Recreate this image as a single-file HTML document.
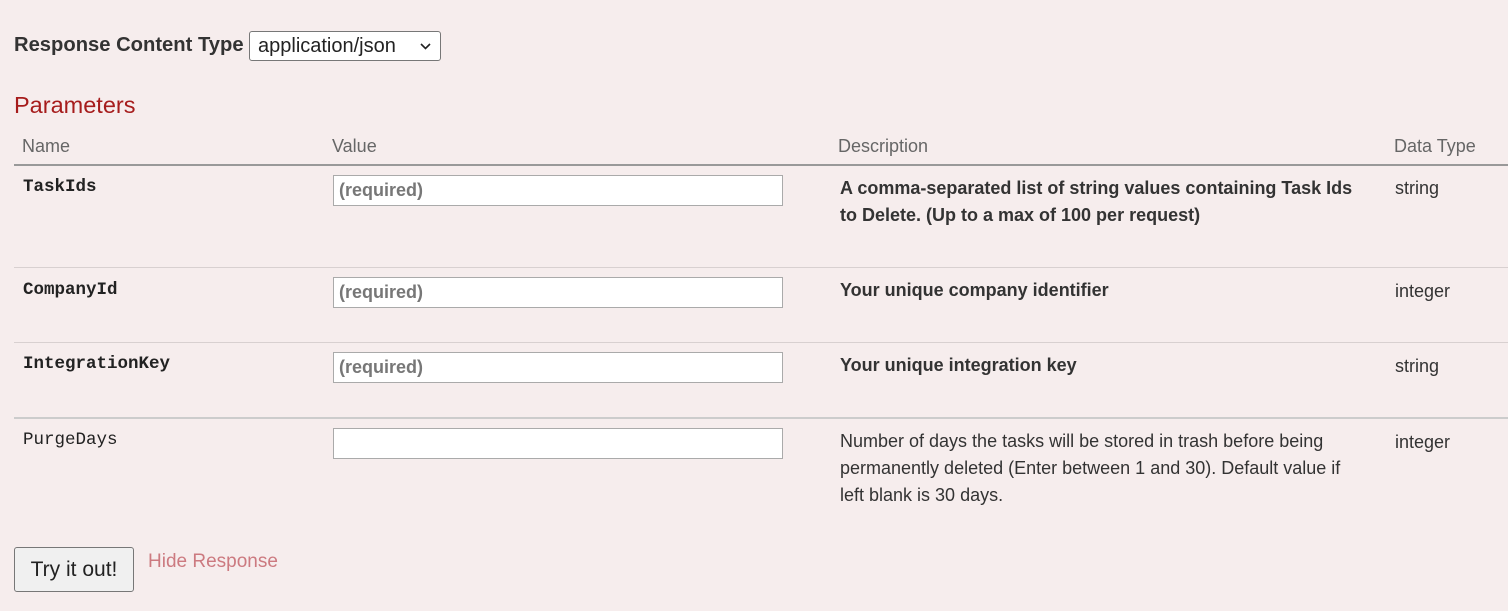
<!DOCTYPE html>
<html><head><style>
body{margin:0;width:1508px;height:611px;background:#f6eded;font-family:"Liberation Sans",sans-serif;color:#333;position:relative;overflow:hidden}
.a{position:absolute;white-space:nowrap}
.h{font-size:18px;color:#666}
.n{font-family:"Liberation Mono",monospace;font-size:17.5px;color:#222}
.in{position:absolute;left:333px;background:#fff;border:1px solid #aaa;font-size:18px;font-weight:bold;color:#777;line-height:29px;padding-left:5px;box-sizing:border-box;width:450px;height:31px}
.d{font-size:18px;line-height:27px;color:#333}
.line{position:absolute;left:14px;right:0;height:1px;background:#d8d0d0}
</style></head><body>
<div class="a" style="left:14px;top:34px;font-size:20.2px;font-weight:bold;color:#333">Response Content Type</div>
<div class="a" style="left:249px;top:31px;width:182px;height:28px;border:1px solid #777;border-radius:3px;background:#fff;font-size:20px;line-height:28px;padding-left:8px;color:#222">application/json
<svg style="position:absolute;left:170px;top:11px" width="11" height="7" viewBox="0 0 11 7"><path d="M1 1 L5.5 5.5 L10 1" fill="none" stroke="#222" stroke-width="1.6"/></svg></div>
<div class="a" style="left:14px;top:92px;font-size:23.5px;color:#a61c1c">Parameters</div>
<div class="a h" style="left:22px;top:136px">Name</div>
<div class="a h" style="left:332px;top:136px">Value</div>
<div class="a h" style="left:838px;top:136px">Description</div>
<div class="a h" style="left:1394px;top:136px">Data Type</div>
<div class="line" style="top:164px;height:2px;background:#999"></div>

<div class="a n" style="left:23px;top:177px;font-weight:bold">TaskIds</div>
<div class="in" style="top:175px">(required)</div>
<div class="a d" style="left:840px;top:175px;font-weight:bold">A comma-separated list of string values containing Task Ids<br>to Delete. (Up to a max of 100 per request)</div>
<div class="a d" style="left:1395px;top:175px">string</div>
<div class="line" style="top:267px"></div>

<div class="a n" style="left:23px;top:280px;font-weight:bold">CompanyId</div>
<div class="in" style="top:277px">(required)</div>
<div class="a d" style="left:840px;top:277px;font-weight:bold">Your unique company identifier</div>
<div class="a d" style="left:1395px;top:278px">integer</div>
<div class="line" style="top:342px"></div>

<div class="a n" style="left:23px;top:354px;font-weight:bold">IntegrationKey</div>
<div class="in" style="top:352px">(required)</div>
<div class="a d" style="left:840px;top:352px;font-weight:bold">Your unique integration key</div>
<div class="a d" style="left:1395px;top:353px">string</div>
<div class="line" style="top:417px;height:2px;background:#ccc"></div>

<div class="a n" style="left:23px;top:430px">PurgeDays</div>
<div class="in" style="top:428px"></div>
<div class="a d" style="left:840px;top:428px">Number of days the tasks will be stored in trash before being<br>permanently deleted (Enter between 1 and 30). Default value if<br>left blank is 30 days.</div>
<div class="a d" style="left:1395px;top:429px">integer</div>

<div class="a" style="left:14px;top:547px;width:118px;height:43px;border:1px solid #777;border-radius:3px;background:#f0f0f0;font-size:21px;line-height:43px;text-align:center;color:#222">Try it out!</div>
<div class="a" style="left:148px;top:551px;font-size:19px;color:#cc7a80">Hide Response</div>
</body></html>
